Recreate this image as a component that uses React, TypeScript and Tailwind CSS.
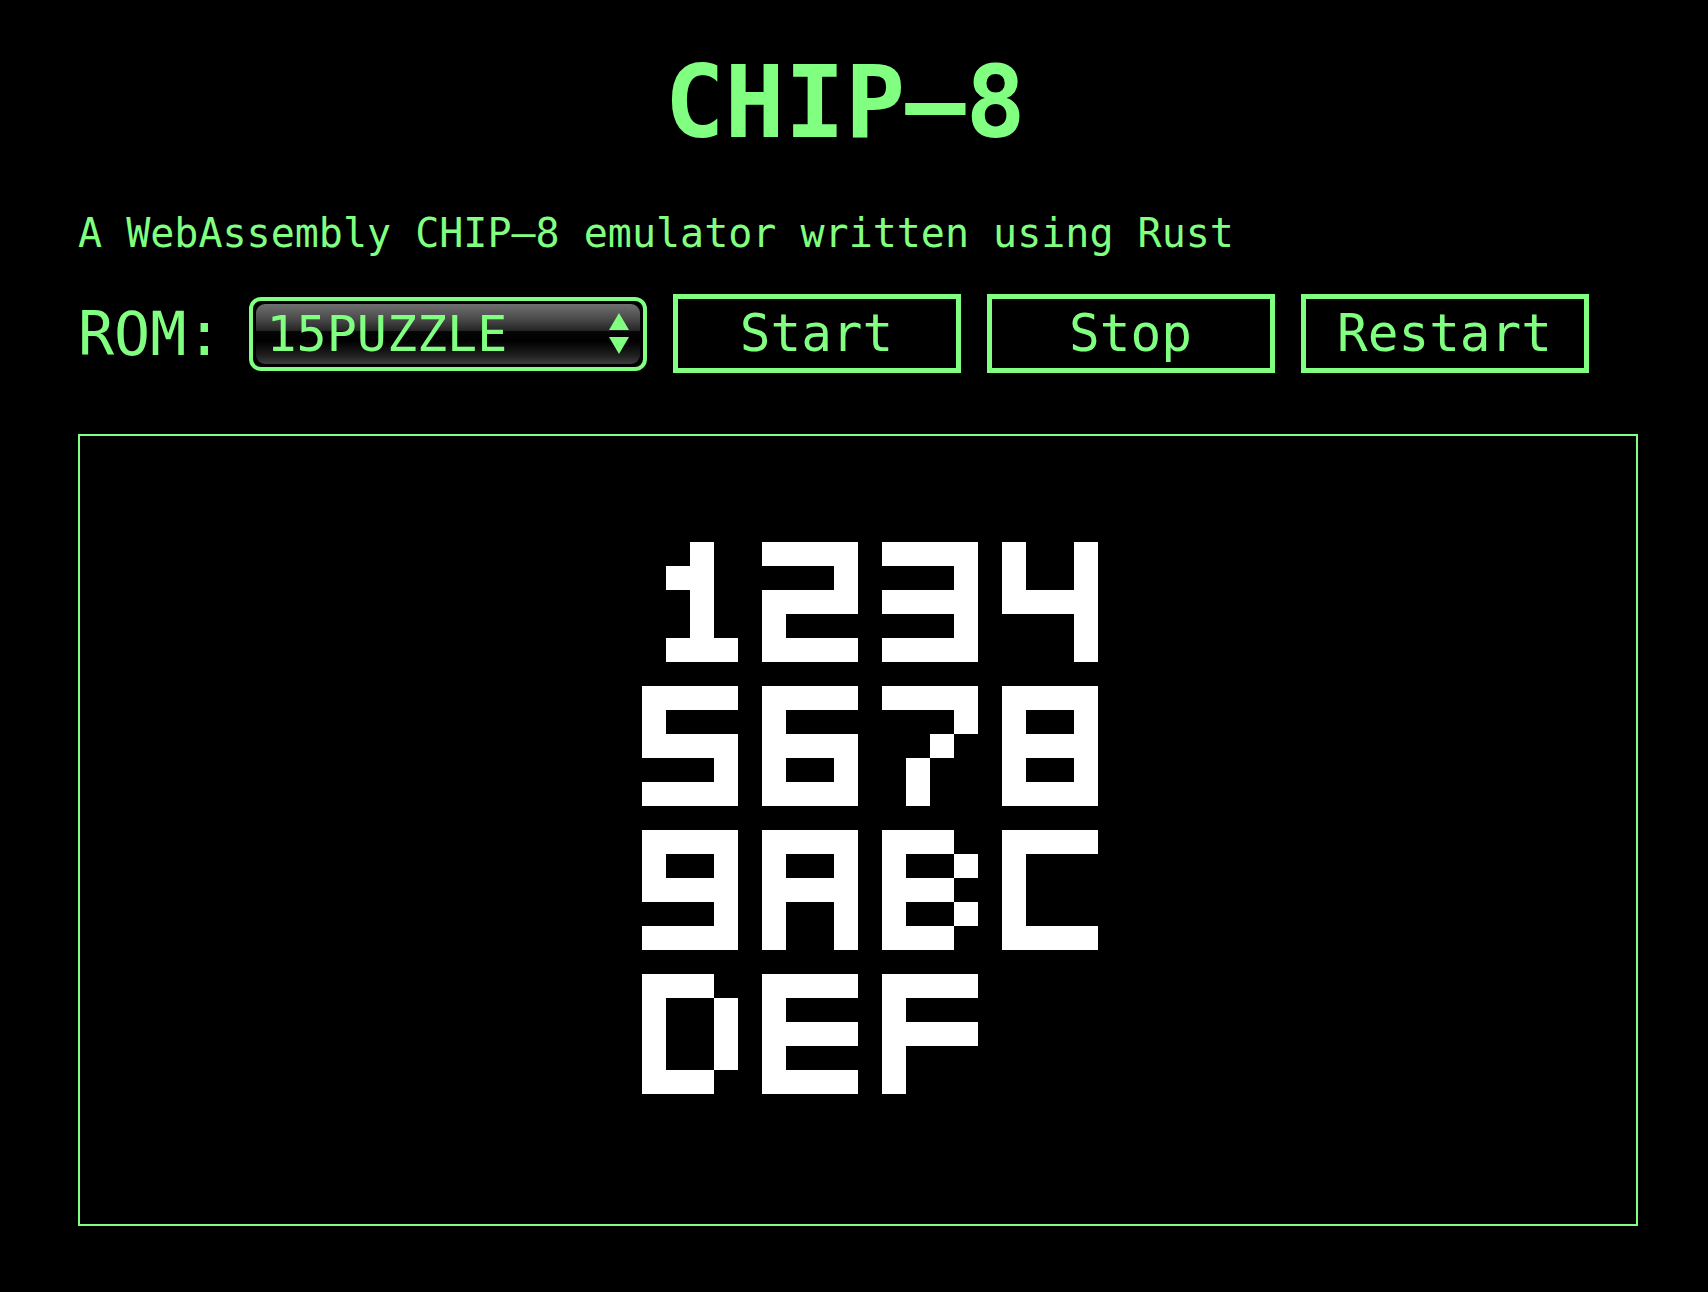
import React from "react";

const FONT: Record<string, number[]> = {
  "1": [0x20, 0x60, 0x20, 0x20, 0x70],
  "2": [0xf0, 0x10, 0xf0, 0x80, 0xf0],
  "3": [0xf0, 0x10, 0xf0, 0x10, 0xf0],
  "4": [0x90, 0x90, 0xf0, 0x10, 0x10],
  "5": [0xf0, 0x80, 0xf0, 0x10, 0xf0],
  "6": [0xf0, 0x80, 0xf0, 0x90, 0xf0],
  "7": [0xf0, 0x10, 0x20, 0x40, 0x40],
  "8": [0xf0, 0x90, 0xf0, 0x90, 0xf0],
  "9": [0xf0, 0x90, 0xf0, 0x10, 0xf0],
  A: [0xf0, 0x90, 0xf0, 0x90, 0x90],
  B: [0xe0, 0x90, 0xe0, 0x90, 0xe0],
  C: [0xf0, 0x80, 0x80, 0x80, 0xf0],
  D: [0xe0, 0x90, 0x90, 0x90, 0xe0],
  E: [0xf0, 0x80, 0xf0, 0x80, 0xf0],
  F: [0xf0, 0x80, 0xf0, 0x80, 0x80],
};

const BOARD = [
  ["1", "2", "3", "4"],
  ["5", "6", "7", "8"],
  ["9", "A", "B", "C"],
  ["D", "E", "F"],
];

const PX = 24;

function Display() {
  const rects: React.ReactElement[] = [];
  BOARD.forEach((row, j) => {
    row.forEach((ch, i) => {
      const glyph = FONT[ch];
      const ox = 562 + i * 120;
      const oy = 106 + j * 144;
      glyph.forEach((bits, r) => {
        for (let c = 0; c < 4; c++) {
          if (bits & (0x80 >> c)) {
            rects.push(
              <rect
                key={`${j}-${i}-${r}-${c}`}
                x={ox + c * PX}
                y={oy + r * PX}
                width={PX}
                height={PX}
                fill="#ffffff"
              />
            );
          }
        }
      });
    });
  });
  return (
    <svg width={1556} height={788} viewBox="0 0 1556 788" shapeRendering="crispEdges" className="block">
      {rects}
    </svg>
  );
}

export default function App() {
  return (
    <div
      className="min-h-screen w-full bg-black text-[#80ff80] pl-[78px] pt-[45px] pb-[66px]"
      style={{ fontFamily: '"DejaVu Sans Mono", "Liberation Mono", monospace' }}
    >
      <h1 className="w-[1534px] text-center text-[100px] leading-[116px] font-bold">CHIP–8</h1>

      <p className="mt-[49px] text-[40px] leading-[46px]">
        A WebAssembly CHIP–8 emulator written using Rust
      </p>

      <div className="mt-[38px] flex items-center gap-[26px] h-[79px]">
        <span className="text-[60px] leading-[70px]">ROM:</span>

        <div className="relative w-[398px] h-[74px] rounded-[12px] border-4 border-[#80ff80] p-[3px]">
          <div className="relative h-full w-full rounded-[9px] overflow-hidden bg-[linear-gradient(to_bottom,#707070_0%,#4a4a4a_25%,#262626_44%,#050505_46%,#000000_62%,#1e1e1e_85%,#3c3c3c_100%)]">
            <select
              defaultValue="15PUZZLE"
              className="appearance-none h-full w-full bg-transparent text-[#80ff80] text-[50px] leading-[60px] pl-[11px] pr-[50px] outline-none border-0"
              style={{ fontFamily: '"DejaVu Sans Mono", "Liberation Mono", monospace' }}
            >
              <option value="15PUZZLE">15PUZZLE</option>
              <option value="BLINKY">BLINKY</option>
              <option value="INVADERS">INVADERS</option>
              <option value="PONG">PONG</option>
              <option value="TETRIS">TETRIS</option>
            </select>
            <svg
              className="pointer-events-none absolute right-[10px] top-1/2 -translate-y-1/2"
              width="22"
              height="44"
              viewBox="0 0 22 44"
            >
              <polygon points="11,1 21,18 1,18" fill="#80ff80" />
              <polygon points="1,25 21,25 11,42" fill="#80ff80" />
            </svg>
          </div>
        </div>

        <button className="w-[288px] h-[79px] border-[5px] border-[#80ff80] bg-black text-[51px] leading-[60px] text-[#80ff80]">
          Start
        </button>
        <button className="w-[288px] h-[79px] border-[5px] border-[#80ff80] bg-black text-[51px] leading-[60px] text-[#80ff80]">
          Stop
        </button>
        <button className="w-[288px] h-[79px] border-[5px] border-[#80ff80] bg-black text-[51px] leading-[60px] text-[#80ff80]">
          Restart
        </button>
      </div>

      <div className="mt-[61px] w-[1560px] h-[792px] border-2 border-[#80ff80] bg-black">
        <Display />
      </div>
    </div>
  );
}
